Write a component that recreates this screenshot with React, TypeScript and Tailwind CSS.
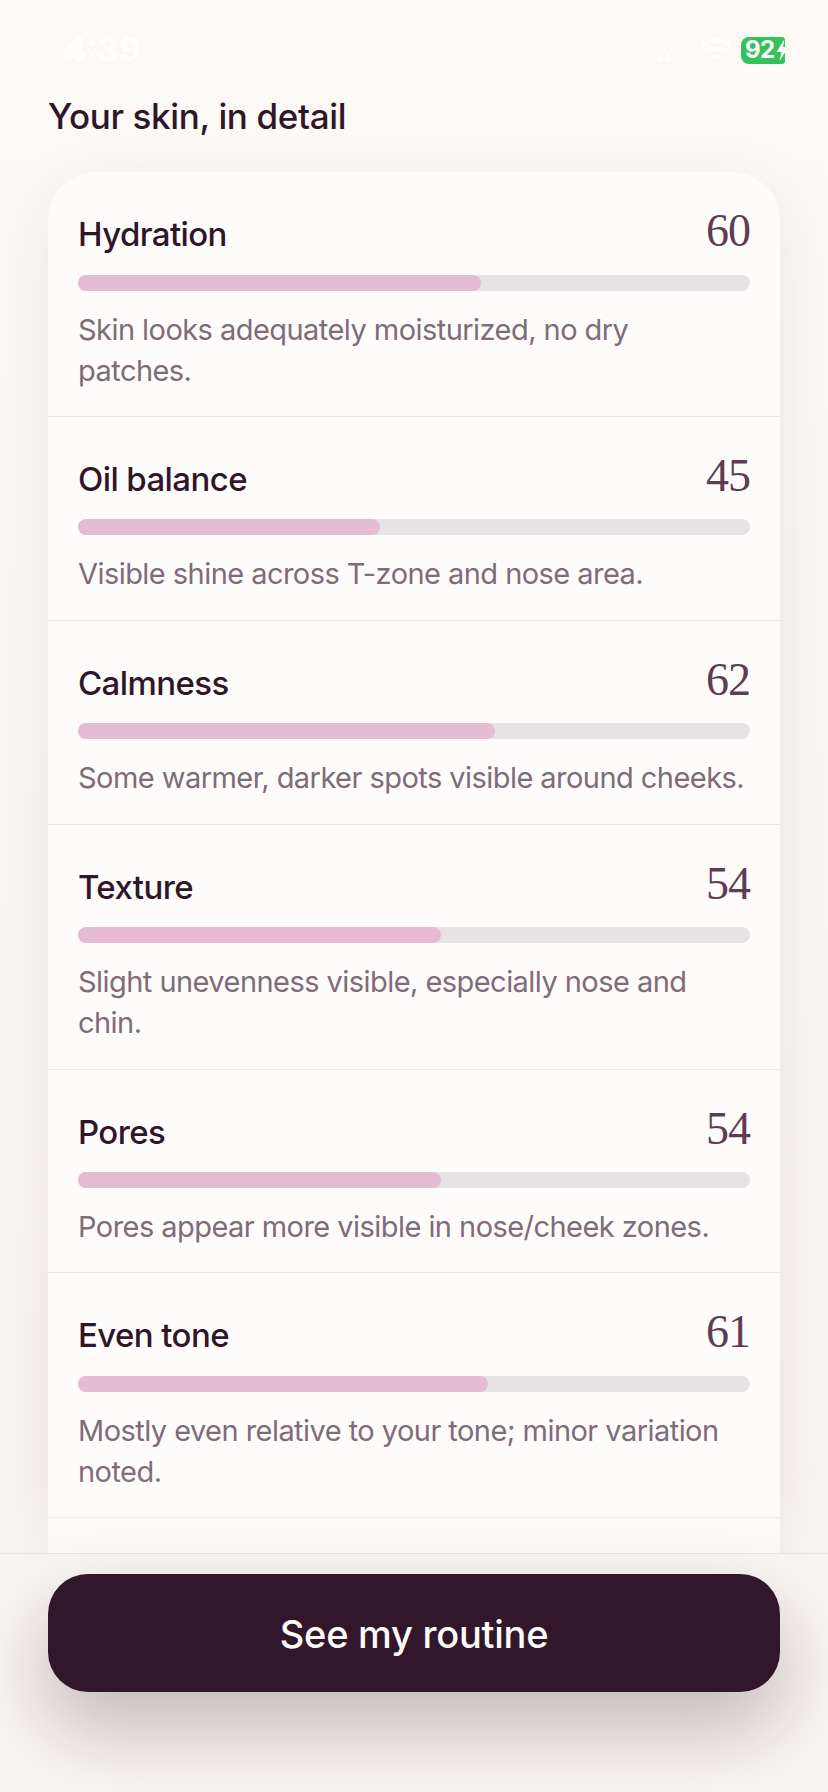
import React from 'react';

const metrics = [
  { name: 'Hydration', score: 60, note: 'Skin looks adequately moisturized, no dry patches.' },
  { name: 'Oil balance', score: 45, note: 'Visible shine across T-zone and nose area.' },
  { name: 'Calmness', score: 62, note: 'Some warmer, darker spots visible around cheeks.' },
  { name: 'Texture', score: 54, note: 'Slight unevenness visible, especially nose and chin.' },
  { name: 'Pores', score: 54, note: 'Pores appear more visible in nose/cheek zones.' },
  { name: 'Even tone', score: 61, note: 'Mostly even relative to your tone; minor variation noted.' },
];

function StatusBar() {
  return (
    <div className="flex h-[96px] items-center justify-between pl-[64px] pr-[43px] pt-[4px]">
      <span className="text-[33px] font-bold text-white">4:39</span>
      <div className="flex items-center">
        <svg width="32" height="20" viewBox="0 0 40 24" className="mr-[10px] mt-[6px] text-white" fill="currentColor">
          <rect x="0" y="16" width="7" height="8" rx="1" />
          <rect x="10" y="11" width="7" height="13" rx="1" />
          <rect x="20" y="6" width="7" height="18" rx="1" opacity="0.4" />
          <rect x="30" y="1" width="7" height="23" rx="1" opacity="0.4" />
        </svg>
        <svg width="34" height="26" viewBox="0 0 38 28" className="mr-[8px]" fill="none" stroke="white" strokeWidth="4.5">
          <path d="M3 10a23 23 0 0 1 32 0" />
          <path d="M9.500 16a14 14 0 0 1 19 0" />
          <path d="M15 22a6 6 0 0 1 8 0" />
        </svg>
        <div className="flex h-[27px] w-[44px] items-center overflow-hidden rounded-l-[8px] rounded-r-[3px] bg-[#34c25a] pl-[4px]">
          <span className="text-[24px] font-bold leading-none tracking-[-0.5px] text-white">92</span>
          <svg width="13" height="22" viewBox="0 0 12 22" className="ml-[1px] shrink-0" fill="white">
            <path d="M8 0 0 13h5l-2 9 9-14H6.500z" />
          </svg>
        </div>
      </div>
    </div>
  );
}

function MetricRow({ name, score, note }: { name: string; score: number; note: string }) {
  return (
    <div className="border-b border-[#e9e6e6] px-[30px] pb-[25.4px] pt-[33px]">
      <div className="flex items-baseline justify-between">
        <span className="text-[33px] font-medium tracking-[-0.6px] text-[#2f1628]">{name}</span>
        <span className="font-['Liberation_Serif',serif] text-[46px] leading-[52px] tracking-[-1px] text-[#5e3c54]">{score}</span>
      </div>
      <div className="mt-[15px] h-[16px] rounded-full bg-[#e6e3e5]">
        <div className="h-full rounded-full bg-[#e6bcd3]" style={{ width: `${score}%` }} />
      </div>
      <p className="mt-[18px] max-w-[668px] text-[29px] leading-[41px] tracking-[-0.55px] text-[#806b79]">{note}</p>
    </div>
  );
}

export default function App() {
  return (
    <div className="relative h-[1792px] w-[828px] overflow-hidden bg-gradient-to-b from-[#fcf9f6] to-[#f7f3f0] font-['Inter',sans-serif]">
      <StatusBar />
      <h1 className="mt-[-2px] px-[48px] text-[35px] font-medium leading-[44px] tracking-[-0.35px] text-[#2f1628]">
        Your skin, in detail
      </h1>
      <div className="mx-[48px] mt-[34px] rounded-[48px] bg-[#fefcfb] shadow-[0_16px_64px_rgba(50,23,41,0.08)]">
        {metrics.map((m) => (
          <MetricRow key={m.name} {...m} />
        ))}
        <div className="h-[300px]" />
      </div>

      <div className="absolute inset-x-0 bottom-[239px] h-[80px] bg-gradient-to-b from-transparent to-[#f8f4f1]/50" />
      <div className="absolute inset-x-0 bottom-0 h-[239px] border-t border-[#e9e5e3] bg-[#f8f4f1] px-[48px] pt-[20px]">
        <button className="flex h-[118px] w-full items-center justify-center rounded-[40px] bg-[#32172a] pt-[3px] text-[38px] font-medium tracking-[-0.25px] text-[#fdfbf9] shadow-[0_36px_76px_rgba(40,20,30,0.26)]">
          See my routine
        </button>
      </div>
    </div>
  );
}
